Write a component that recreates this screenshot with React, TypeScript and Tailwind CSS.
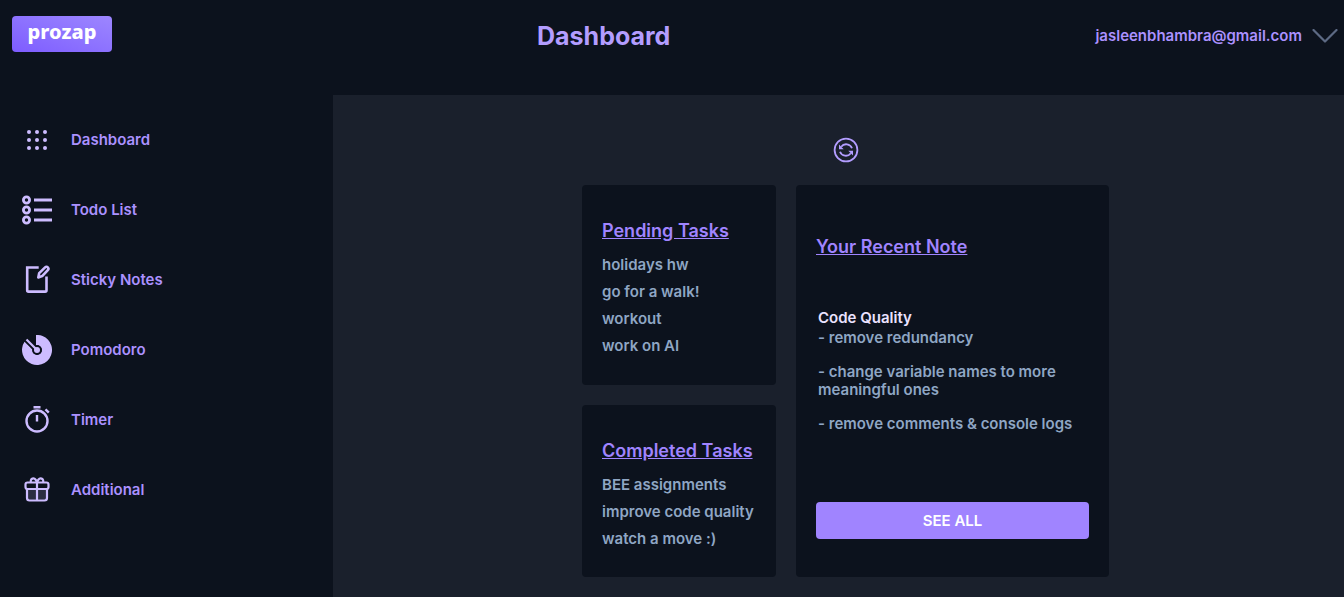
import type { ReactNode } from "react";

function Icon({ children }: { children: ReactNode }) {
  return (
    <svg viewBox="0 0 30 30" className="size-[30px] shrink-0 text-[#cdbcff]" fill="none" stroke="currentColor" aria-hidden="true">
      {children}
    </svg>
  );
}

const dots = [7, 15, 23];
const rows = [5, 15, 25];

const navItems: { label: string; icon: ReactNode }[] = [
  {
    label: "Dashboard",
    icon: (
      <Icon>
        {dots.map((y) => dots.map((x) => <circle key={`${x}-${y}`} cx={x} cy={y} r="2" fill="currentColor" stroke="none" />))}
      </Icon>
    ),
  },
  {
    label: "Todo List",
    icon: (
      <Icon>
        {rows.map((y) => (
          <g key={y} strokeWidth="2.8">
            <circle cx="4.5" cy={y} r="3.1" />
            <path d={`M12 ${y}h18`} strokeWidth="3" />
          </g>
        ))}
      </Icon>
    ),
  },
  {
    label: "Sticky Notes",
    icon: (
      <Icon>
        <path d="M16.7 2.5H5.2v22.8q0 1.3 1.3 1.3h16.7q1.3 0 1.3-1.3V11.5" strokeWidth="2.6" />
        <path d="M16.3 12.4l.9-4.300 5.900-5.700a1.900 1.900 0 0 1 2.700 2.700l-5.600 6z" strokeWidth="2.600" strokeLinejoin="round" />
      </Icon>
    ),
  },
  {
    label: "Pomodoro",
    icon: (
      <Icon>
        <path d="M14 0A15 15 0 1 1 2.500 6.700L10.500 14.700A4.700 4.700 0 1 0 14 10.500Z" fill="currentColor" stroke="none" />
        <circle cx="15" cy="15" r="4.900" fill="#0c121d" stroke="none" />
        <circle cx="15" cy="15" r="3" fill="currentColor" stroke="none" />
        <path d="M4.500 4.500l9 9" strokeWidth="2.200" />
      </Icon>
    ),
  },
  {
    label: "Timer",
    icon: (
      <Icon>
        <circle cx="15" cy="16" r="10.500" strokeWidth="2.400" />
        <path d="M11.500 2.200h7M15 10v6.500M23.500 4.300l3.300 3.300" strokeWidth="2.400" />
      </Icon>
    ),
  },
  {
    label: "Additional",
    icon: (
      <Icon>
        <path d="M5 13.500h20v11H5z" fill="#cdbcff" fillOpacity=".16" stroke="none" />
        <rect x="3.500" y="7.500" width="23" height="6.500" rx="2" strokeWidth="2.200" />
        <path d="M5 14v9q0 2.500 2.500 2.500h15q2.500 0 2.500-2.500v-9M15 7.500v18M9 7.300a2.700 2.700 0 1 1 5-2l1 2.200 1-2.200a2.700 2.700 0 1 1 5 2" strokeWidth="2.200" />
      </Icon>
    ),
  },
];

function RefreshIcon() {
  return (
    <svg viewBox="0 0 26 26" className="size-[26px]" fill="none" stroke="currentColor" strokeWidth="1.8" aria-hidden="true">
      <circle cx="13" cy="13" r="11.4" />
      <path d="M19 11.300A6.200 6.200 0 0 0 8.200 9.800M7 14.700A6.200 6.200 0 0 0 17.800 16.200" />
      <path d="M6 7.600V12.300H10.700ZM20 18.400V13.700H15.300Z" fill="currentColor" stroke="none" />
    </svg>
  );
}

function TaskCard({ title, tasks }: { title: string; tasks: string[] }) {
  return (
    <section className="grow rounded bg-[#0c121d] px-5 pt-8 pb-6">
      <h2 className="text-lg leading-7 font-semibold whitespace-nowrap text-[#a084ff] underline">{title}</h2>
      <ul className="mt-1.5 text-[15px] leading-[27px] font-semibold whitespace-nowrap text-[#8fa6c4]">
        {tasks.map((task) => (
          <li key={task}>{task}</li>
        ))}
      </ul>
    </section>
  );
}

export default function App() {
  return (
    <div className="flex min-h-screen flex-col bg-[#0c121d] font-['Inter',sans-serif]">
      <header className="flex h-[95px] items-start justify-between pt-4 pr-1.5 pl-3">
        <a href="#" className="flex h-9 w-[100px] justify-center rounded bg-linear-to-tr from-[#7e5cff] to-[#9d86ff] font-['Noto_Sans',sans-serif] text-xl leading-8 font-extrabold text-white">
          prozap
        </a>
        <h1 className="text-[25px] leading-10 font-bold text-[#b39dff]">Dashboard</h1>
        <button type="button" className="flex h-10 items-center gap-2.5 text-[15px] font-semibold text-[#ab91ff]">
          jasleenbhambra@gmail.com
          <svg viewBox="0 0 26 14" className="h-3.5 w-[26px]" fill="none" stroke="#5d6a84" strokeWidth="2.2" strokeLinecap="round" strokeLinejoin="round" aria-hidden="true">
            <path d="M1.500 1L13 12.500L24.500 1" />
          </svg>
        </button>
      </header>
      <div className="flex grow">
        <nav className="w-[333px] shrink-0 pt-2.5 pl-[22px]">
          <ul>
            {navItems.map(({ label, icon }) => (
              <li key={label}>
                <a href="#" className="flex h-[70px] items-center gap-[19px] text-[15px] font-semibold text-[#ab91ff]">
                  {icon}
                  {label}
                </a>
              </li>
            ))}
          </ul>
        </nav>
        <main className="flex grow flex-col items-center bg-[#1a202c] pt-[42px] pb-5 pl-3.5">
          <button type="button" aria-label="Refresh" className="text-[#b39dff]">
            <RefreshIcon />
          </button>
          <div className="mt-[22px] flex grow gap-5">
            <div className="flex w-[194px] flex-col gap-5">
              <TaskCard title="Pending Tasks" tasks={["holidays hw", "go for a walk!", "workout", "work on AI"]} />
              <TaskCard title="Completed Tasks" tasks={["BEE assignments", "improve code quality", "watch a move :)"]} />
            </div>
            <section className="flex w-[313px] flex-col rounded bg-[#0c121d] px-5 pt-12 pb-[38px]">
              <h2 className="text-lg leading-7 font-semibold text-[#a084ff] underline">Your Recent Note</h2>
              <article className="mt-12 px-0.5 text-[15px] leading-[18px] font-semibold text-[#8fa6c4]">
                <h3 className="mb-0.5 text-[#ebe2ff]">Code Quality</h3>
                <p>- remove redundancy</p>
                <p className="mt-4">- change variable names to more meaningful ones</p>
                <p className="mt-4">- remove comments &amp; console logs</p>
              </article>
              <button type="button" className="mt-auto h-[37px] rounded bg-[#a084ff] pt-0.5 text-[15px] font-semibold text-white">
                SEE ALL
              </button>
            </section>
          </div>
        </main>
      </div>
    </div>
  );
}
